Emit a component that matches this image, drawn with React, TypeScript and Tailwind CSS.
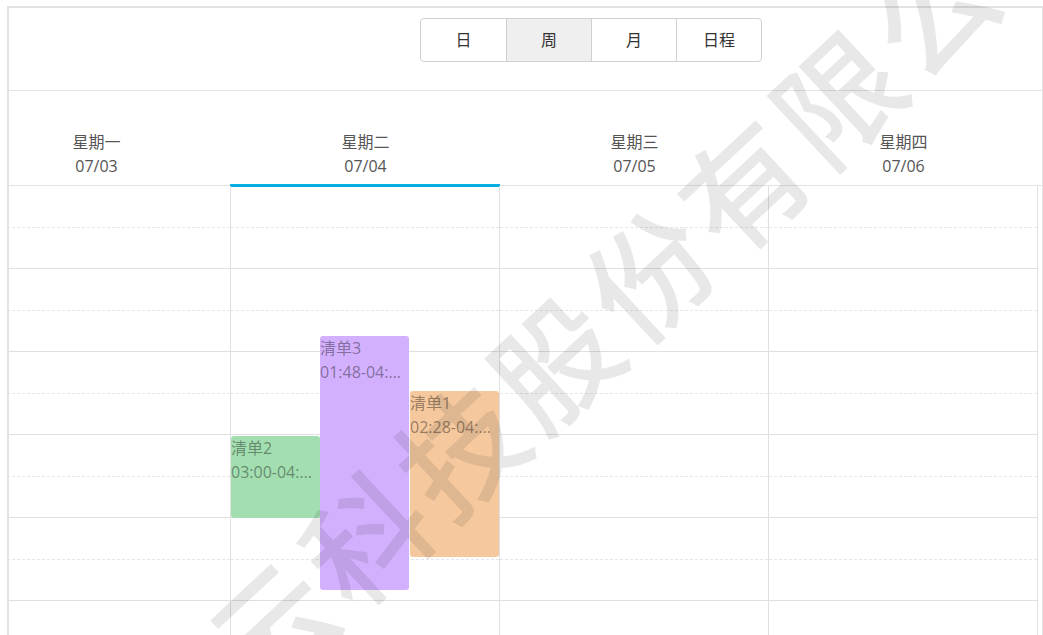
import React from 'react';

const days = [
  { name: '星期一', date: '07/03' },
  { name: '星期二', date: '07/04', active: true },
  { name: '星期三', date: '07/05' },
  { name: '星期四', date: '07/06' },
];

const views = ['日', '周', '月', '日程'];

const events = [
  { title: '清单2', time: '03:00-04:00', top: 250, height: 82, left: 0, color: 'bg-[#a3deb0]' },
  { title: '清单3', time: '01:48-04:52', top: 150, height: 254, left: 89, color: 'bg-[#d2b0fd]' },
  { title: '清单1', time: '02:28-04:28', top: 205, height: 166, left: 179, color: 'bg-[#f5c89e]' },
];

const hours = [0, 1, 2, 3, 4, 5, 6];

const App: React.FC = () => {
  return (
    <div className="relative h-screen w-full overflow-hidden bg-white font-['Open_Sans','Noto_Sans_CJK_SC',sans-serif]">
      <div className="ml-[7px] mt-[6px] w-[1036px] border-l-2 border-t-2 border-r border-[#e3e3e3]">
        {/* Toolbar */}
        <div className="h-[83px] border-b border-[#e3e3e3] pt-[10px]">
          <div className="ml-[411px] flex w-fit rounded-[4px] border border-[#d0d0d0]">
            {views.map((v, i) => (
              <div
                key={v}
                className={`flex h-[42px] w-[85px] items-center justify-center text-[16px] text-[#333] ${
                  i > 0 ? 'border-l border-[#d0d0d0]' : ''
                } ${v === '周' ? 'bg-[#efefef]' : ''}`}
              >
                {v}
              </div>
            ))}
          </div>
        </div>

        <div className="overflow-hidden">
          {/* Day header */}
          <div className="-ml-[47px] flex h-[95px] border-b border-[#e3e3e3]">
            {days.map((d) => (
              <div key={d.date} className="relative flex w-[269px] shrink-0 flex-col items-center justify-end pb-[7px] text-[16px] leading-[24px] text-[#555]">
                <div>{d.name}</div>
                <div>{d.date}</div>
                {d.active && <div className="absolute -bottom-[2px] -left-[1px] right-0 h-[3px] bg-[#00afdf]" />}
              </div>
            ))}
          </div>

          {/* Time grid */}
          <div className="-ml-[47px] flex">
            {days.map((d) => (
              <div key={d.date} className="relative w-[269px] shrink-0 border-r border-[#e0e0e0]">
                {hours.map((h) => (
                  <div key={h}>
                    <div className="h-[42px] border-b border-dashed border-[#e6e6e6]" />
                    <div className="h-[41px] border-b border-[#e0e0e0]" />
                  </div>
                ))}
                {d.active &&
                  events.map((e) => (
                    <div
                      key={e.title}
                      className={`absolute w-[89px] overflow-hidden rounded-[3px] pr-[6px] ${e.color} text-[16px] leading-[24px] text-black/40`}
                      style={{ top: e.top, height: e.height, left: e.left }}
                    >
                      <div className="truncate">{e.title}</div>
                      <div className="truncate">{e.time}</div>
                    </div>
                  ))}
              </div>
            ))}
          </div>
        </div>
      </div>

      {/* Watermark */}
      <div className="pointer-events-none absolute left-[648px] top-[268px] -translate-x-1/2 -translate-y-1/2 -rotate-[43deg] whitespace-nowrap font-['Noto_Sans_CJK_SC',sans-serif] text-[122px] font-medium leading-none tracking-[7px] text-black/[0.09]">
        云科技股份有限公司
      </div>
    </div>
  );
};

export default App;
